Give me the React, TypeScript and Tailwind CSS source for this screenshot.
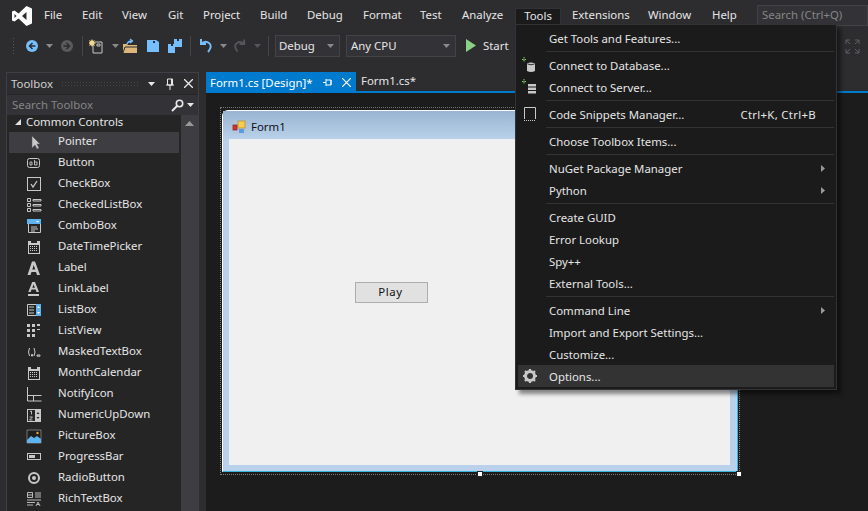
import React from 'react';

const font = "font-['Noto_Sans','Liberation_Sans',sans-serif]";

const menus = [
  { label: 'File', w: 'w-[38px]' },
  { label: 'Edit', w: 'w-[40px]' },
  { label: 'View', w: 'w-[46px]' },
  { label: 'Git', w: 'w-[35px]' },
  { label: 'Project', w: 'w-[57px]' },
  { label: 'Build', w: 'w-[47px]' },
  { label: 'Debug', w: 'w-[56px]' },
  { label: 'Format', w: 'w-[57px]' },
  { label: 'Test', w: 'w-[42px]' },
  { label: 'Analyze', w: 'w-[53px]' },
];

const Caret = ({ className = '' }: { className?: string }) => (
  <svg width="7" height="4" viewBox="0 0 7 4" className={className}>
    <path d="M0 0h7L3.5 4z" fill="currentColor" />
  </svg>
);

const Sep = () => <div className="w-px h-[20px] bg-[#46464a]" />;

const tools: { name: string; icon: React.ReactNode }[] = [
  { name: 'Pointer', icon: <path d="M6 2v12l3-3 2 4 2-1-2-4h3z" fill="#c8c8c8" stroke="#555" strokeWidth=".5" /> },
  {
    name: 'Button',
    icon: (
      <>
        <rect x="1.5" y="3.5" width="12" height="9" rx="2" fill="none" stroke="#c8c8c8" />
        <path d="M4 7h2v3H4zM8.500 5v5M8.500 7H11v3H8.500" fill="none" stroke="#c8c8c8" strokeWidth=".9" />
      </>
    ),
  },
  {
    name: 'CheckBox',
    icon: (
      <>
        <rect x="1.500" y="1.500" width="13" height="13" fill="none" stroke="#c8c8c8" />
        <path d="M5 8l2 3 4-6" fill="none" stroke="#c8c8c8" strokeWidth="1.300" />
      </>
    ),
  },
  {
    name: 'CheckedListBox',
    icon: (
      <path
        d="M1.500 1.500h3v3h-3zM1.500 6.500h3v3h-3zM1.500 11.500h3v3h-3zM7 2.500h8v1.500H7zM7 7.500h8V9H7zM7 12.500h8V14H7z"
        fill="none"
        stroke="#c8c8c8"
        strokeWidth="1"
      />
    ),
  },
  {
    name: 'ComboBox',
    icon: (
      <>
        <rect x="1" y="1" width="14" height="5" fill="#5fb3ee" />
        <path d="M10 3h3l-1.500 1.500z" fill="#fff" />
        <path d="M2.500 6v8.500h12V6M5 9h6M5 11h7M5 13h4" fill="none" stroke="#c8c8c8" />
      </>
    ),
  },
  {
    name: 'DateTimePicker',
    icon: (
      <>
        <path d="M2 2h3v2h6V2h3v13H2z" fill="#c8c8c8" />
        <path d="M3 6h10v8H3z" fill="#252526" />
        <path d="M4 7.500h8M4 9.500h8M4 11.500h8" stroke="#c8c8c8" strokeDasharray="1 1" />
      </>
    ),
  },
  { name: 'Label', icon: <path fillRule="evenodd" d="M6 1.500h3L14 15h-3l-1-3H5.500l-1 3H1.500zM6.300 9.500h3L7.700 5z" fill="#c8c8c8" /> },
  {
    name: 'LinkLabel',
    icon: <path fillRule="evenodd" d="M6.200 1h2.800l4 10h-2.500l-.8-2.500H5.500L4.700 11H2.300zM6.300 6.800h2.600L7.600 3.500zM2 13h11v2H2z" fill="#c8c8c8" />,
  },
  {
    name: 'ListBox',
    icon: (
      <>
        <path d="M1.500 2.500h13v11h-13z" fill="none" stroke="#c8c8c8" />
        <rect x="10" y="2" width="5" height="12" fill="#5fb3ee" />
        <path d="M11 6l1.500-2L14 6zM11 10l1.500 2L14 10z" fill="#fff" />
        <path d="M3 5h5M3 8h5M3 11h5" stroke="#c8c8c8" />
      </>
    ),
  },
  {
    name: 'ListView',
    icon: <path d="M1 1h3v3H1zM6 1h3v3H6zM11 1h3v2h-3zM1 6h3v3H1zM6 6h3v3H6zM11 6h3v1h-3zM1 11h3v3H1zM6 11h3v3H6z" fill="#c8c8c8" />,
  },
  {
    name: 'MaskedTextBox',
    icon: <path d="M3.500 4Q1.500 8 3.500 12M8 4Q10 8 8 12M5.500 10.500h1.200v1.500H5.500zM11 11h3v1.200h-3z" fill="none" stroke="#c8c8c8" />,
  },
  {
    name: 'MonthCalendar',
    icon: (
      <>
        <path d="M2 2h3v2h6V2h3v13H2z" fill="#c8c8c8" />
        <path d="M3 6h10v8H3z" fill="#252526" />
        <path d="M4 7.500h8M4 9.500h8M4 11.500h8" stroke="#c8c8c8" strokeDasharray="1 1" />
      </>
    ),
  },
  { name: 'NotifyIcon', icon: <path d="M1.500 1v14h14M1.500 9.500h14M7.500 9.500V15" fill="none" stroke="#c8c8c8" /> },
  {
    name: 'NumericUpDown',
    icon: (
      <>
        <rect x="1.500" y="2.500" width="13" height="12" fill="none" stroke="#c8c8c8" />
        <rect x="9" y="2" width="6" height="13" fill="#c8c8c8" />
        <path d="M10.500 7l1.500-2 1.500 2zM10.500 10l1.500 2 1.500-2z" fill="#252526" />
        <path d="M4 4.500l1.500-.5v3.500M3.500 10h3l-3 3h3" fill="none" stroke="#c8c8c8" strokeWidth=".9" />
      </>
    ),
  },
  {
    name: 'PictureBox',
    icon: (
      <>
        <path d="M1 2h14v13H1z" fill="#1f1f20" stroke="#c8c8c8" strokeWidth=".5" />
        <path d="M1 12l4-4 3 2 3-2 4 3v4H1z" fill="#5fb3ee" />
        <circle cx="11.500" cy="5" r="1.200" fill="#e8a33d" />
      </>
    ),
  },
  {
    name: 'ProgressBar',
    icon: (
      <>
        <rect x="1.500" y="4.500" width="13" height="6" fill="none" stroke="#c8c8c8" />
        <rect x="3" y="6" width="6" height="3" fill="#c8c8c8" />
      </>
    ),
  },
  {
    name: 'RadioButton',
    icon: (
      <>
        <circle cx="8" cy="8" r="5" fill="none" stroke="#c8c8c8" strokeWidth="2" />
        <circle cx="8" cy="8" r="2" fill="#c8c8c8" />
      </>
    ),
  },
  {
    name: 'RichTextBox',
    icon: (
      <path
        d="M1.500 1.500h5v5h-5zM1.500 4h5M9 2h6M9 4h6M9 6h6M1 9h14M1 11.500h8M1 14h6M10 15l2-4 2 4M11 13.500h2"
        fill="none"
        stroke="#c8c8c8"
        strokeWidth=".9"
      />
    ),
  },
];

type MenuItem = { label?: string; shortcut?: string; arrow?: boolean; active?: boolean; icon?: React.ReactNode; sep?: boolean };

const plus = <path d="M2 0v5M0 2.500h4" stroke="#7fd35f" strokeWidth="1" strokeDasharray="1 .5" />;

const toolsMenu: MenuItem[] = [
  { label: 'Get Tools and Features...' },
  { sep: true },
  {
    label: 'Connect to Database...',
    icon: (
      <svg width="16" height="16" viewBox="0 0 16 16">
        {plus}
        <path d="M5 6.500q4-2 8 0V14q-4 2-8 0z" fill="#c8c8c8" />
        <path d="M5.500 7q3.500 1.500 7 0" fill="none" stroke="#333" />
      </svg>
    ),
  },
  {
    label: 'Connect to Server...',
    icon: (
      <svg width="16" height="16" viewBox="0 0 16 16">
        {plus}
        <path d="M6 5h8v2.500H6zM6 8.500h8V11H6zM6 12h8v2.500H6z" fill="#c8c8c8" />
      </svg>
    ),
  },
  { sep: true },
  {
    label: 'Code Snippets Manager...',
    shortcut: 'Ctrl+K, Ctrl+B',
    icon: (
      <svg width="16" height="16" viewBox="0 0 16 16">
        <path d="M2.500 13V1.500h11V13" fill="none" stroke="#c8c8c8" />
        <path d="M2 14.500h12" stroke="#c8c8c8" strokeDasharray="1 1" />
      </svg>
    ),
  },
  { sep: true },
  { label: 'Choose Toolbox Items...' },
  { sep: true },
  { label: 'NuGet Package Manager', arrow: true },
  { label: 'Python', arrow: true },
  { sep: true },
  { label: 'Create GUID' },
  { label: 'Error Lookup' },
  { label: 'Spy++' },
  { label: 'External Tools...' },
  { sep: true },
  { label: 'Command Line', arrow: true },
  { label: 'Import and Export Settings...' },
  { label: 'Customize...' },
  {
    label: 'Options...',
    active: true,
    icon: (
      <svg width="16" height="16" viewBox="0 0 16 16">
        <circle cx="8" cy="8" r="4.500" fill="none" stroke="#c8c8c8" strokeWidth="3" />
        <path
          d="M8 1v14M1 8h14M3 3l10 10M13 3L3 13"
          stroke="#c8c8c8"
          strokeWidth="2.200"
          strokeDasharray="2.500 9 2.500 0"
        />
        <circle cx="8" cy="8" r="1.700" fill="#333" />
      </svg>
    ),
  },
];

const FormIcon = () => (
  <svg width="14" height="14" viewBox="0 0 14 14">
    <rect x=".5" y=".5" width="13" height="13" fill="#b8c4d4" opacity=".5" />
    <rect x="6" y="1" width="7" height="7" fill="#f5cd50" stroke="#b58a1e" strokeWidth=".7" />
    <rect x="1" y="5" width="4" height="5" fill="#d9302a" stroke="#8a1c1c" strokeWidth=".7" />
    <rect x="7" y="9" width="5" height="4" fill="#5c9be0" />
  </svg>
);

export default function App() {
  return (
    <div className={`${font} relative w-[868px] h-[511px] overflow-hidden bg-[#2d2d30] text-[11.4px] text-[#e6e6e6]`}>
      {/* title / menu bar */}
      <div className="flex items-center h-[31px]">
        <svg width="22" height="22" viewBox="0 0 22 22" className="ml-[11px] mr-[11px]">
          <path d="M15.500 1L21 3.500v15L15.500 21 7.500 13.500 3.500 16.500 1 15.500v-9L3.500 5.500l4 3zM15.500 7l-4.500 4 4.500 4zM3.500 9v4l2-2z" fill="#fff" fillRule="evenodd" />
        </svg>
        {menus.map((m) => (
          <span key={m.label} className={`${m.w} leading-[18px] pb-[2px]`}>
            {m.label}
          </span>
        ))}
        <span className="ml-[8px] w-[49px]" />
        <span className="w-[76px] leading-[18px] pb-[2px]">Extensions</span>
        <span className="w-[64px] leading-[18px] pb-[2px]">Window</span>
        <span className="w-[45px] leading-[18px] pb-[2px]">Help</span>
        <div className="w-[111px] h-[21px] border border-[#434346] bg-[#333337] pl-[4px] text-[#858585] leading-[18px]">Search (Ctrl+Q)</div>
      </div>

      {/* toolbar */}
      <div className="flex items-center h-[29px] pl-[12px]">
        <div className="w-[4px] h-[17px] mr-[9px] bg-[radial-gradient(#55555a_1px,transparent_1px)] bg-[length:3px_3px]" />
        <svg width="14" height="14" viewBox="0 0 14 14">
          <circle cx="7" cy="7" r="6" fill="#75beff" />
          <path d="M10.500 7h-5M7.500 4L4.500 7l3 3" fill="none" stroke="#2d2d30" strokeWidth="1.500" />
        </svg>
        <Caret className="ml-[7px] mr-[7px] text-[#8a8a8a]" />
        <svg width="14" height="14" viewBox="0 0 14 14">
          <circle cx="7" cy="7" r="6" fill="#5a5a5c" />
          <path d="M3.500 7h5M6.500 4l3 3-3 3" fill="none" stroke="#2d2d30" strokeWidth="1.500" />
        </svg>
        <div className="ml-[8px] mr-[6px]"><Sep /></div>
        <svg width="16" height="16" viewBox="0 0 16 16">
          <path d="M6 4h7v11H4V7" fill="none" stroke="#c8c8c8" />
          <path d="M3 1l1 2 2-1-1 2 2 1-2 1 1 2-2-1-1 2-1-2-2 1 1-2-2-1 2-1-1-2 2 1z" fill="#f2d88c" />
          <path d="M8 6h3v2H8z" fill="none" stroke="#c8c8c8" />
        </svg>
        <Caret className="ml-[7px] mr-[3px] text-[#8a8a8a]" />
        <svg width="16" height="16" viewBox="0 0 16 16">
          <path d="M1 6h4l1 1h9v8H1z" fill="#dcb67a" />
          <path d="M1 15l2-6h12" fill="none" stroke="#2d2d30" />
          <path d="M5 6q1-3 5-3M8 1l2.500 2L8 5" fill="none" stroke="#75beff" strokeWidth="1.300" />
        </svg>
        <svg width="14" height="14" viewBox="0 0 14 14" className="ml-[8px]">
          <path d="M1 1h9v4H4V1h6l3 2v10H1z" fill="#75beff" />
          <path d="M7 2h2v2H7z" fill="#2d2d30" />
        </svg>
        <svg width="16" height="16" viewBox="0 0 16 16" className="ml-[7px]">
          <path d="M7 1h3v2h2V1h3v8H7zM1 6h3v2h2V6h2v9H1z" fill="#75beff" />
        </svg>
        <div className="ml-[7px] mr-[7px]"><Sep /></div>
        <svg width="15" height="16" viewBox="0 0 15 16">
          <path d="M3 1v5h5M3 6q4-4 8-1t-1 9" fill="none" stroke="#75beff" strokeWidth="2" />
        </svg>
        <Caret className="ml-[7px] mr-[6px] text-[#8a8a8a]" />
        <svg width="14" height="16" viewBox="0 0 15 16">
          <path d="M12 1v5H7M12 6Q8 2 4 5t1 9" fill="none" stroke="#55555a" strokeWidth="2" />
        </svg>
        <Caret className="ml-[7px] mr-[1px] text-[#55555a]" />
        <div className="ml-[6px] mr-[6px]"><Sep /></div>
        <div className="flex items-center justify-between w-[65px] h-[22px] border border-[#434346] bg-[#333337] pl-[3px] pr-[5px]">
          <span>Debug</span>
          <Caret className="text-[#8a8a8a]" />
        </div>
        <div className="flex items-center justify-between ml-[6px] w-[110px] h-[22px] border border-[#434346] bg-[#333337] pl-[4px] pr-[5px]">
          <span>Any CPU</span>
          <Caret className="text-[#8a8a8a]" />
        </div>
        <svg width="10" height="13" viewBox="0 0 10 13" className="ml-[10px] mr-[7px]">
          <path d="M0 0l10 6.500L0 13z" fill="#89d185" />
        </svg>
        <span>Start</span>
        <div className="flex-1" />
        <svg width="15" height="15" viewBox="0 0 15 15" className="mr-[8px] mt-[1px]">
          <path d="M5 1H1v4M1 1l4 4M10 1h4v4M14 1l-4 4M5 14H1v-4M1 14l4-4M10 14h4v-4M14 14l-4-4" fill="none" stroke="#5f5f62" />
        </svg>
      </div>

      {/* body */}
      <div className="flex h-[451px] pt-[12px]">
        {/* toolbox */}
        <div className="flex flex-col ml-[6px] w-[193px] border-x border-t border-[#3f3f46] bg-[#252526]">
          <div className="flex items-center h-[21px] pl-[4px] pr-[5px] bg-[#2d2d30] text-[#d0d0d0]">
            <span>Toolbox</span>
            <div className="flex-1 h-[5px] mx-[8px] bg-[radial-gradient(#46464a_1px,transparent_1px)] bg-[length:3px_3px]" />
            <Caret className="text-[#e8e8e8] mr-[11px]" />
            <svg width="8" height="12" viewBox="0 0 8 12" className="mr-[10px]">
              <path d="M1.500 1h5v6h-5zM0 7h8M4 7v5M5.500 1v6" fill="none" stroke="#e8e8e8" />
            </svg>
            <svg width="9" height="9" viewBox="0 0 9 9">
              <path d="M0 0l9 9M9 0L0 9" stroke="#e8e8e8" strokeWidth="1.300" />
            </svg>
          </div>
          <div className="flex items-center h-[20px] mt-px pl-[5px] pr-[4px] bg-[#333337] text-[#858585]">
            <span className="flex-1">Search Toolbox</span>
            <svg width="13" height="13" viewBox="0 0 13 13">
              <circle cx="8.500" cy="4.500" r="3.200" fill="none" stroke="#e8e8e8" strokeWidth="1.600" />
              <path d="M6 7l-5 5" stroke="#e8e8e8" strokeWidth="2" />
            </svg>
            <Caret className="ml-[3px] text-[#e8e8e8]" />
          </div>
          <div className="flex flex-1 min-h-0 overflow-hidden">
            <div className="flex-1 min-w-0 overflow-hidden">
              <div className="flex items-start h-[17px] pl-[8px]">
                <svg width="6" height="6" viewBox="0 0 6 6" className="mr-[5px] mt-[4px]">
                  <path d="M6 0v6H0z" fill="#e0e0e0" />
                </svg>
                <span className="leading-[13px]">Common Controls</span>
              </div>
              {tools.map((t) => (
                <div key={t.name} className={`flex items-center h-[21px] ml-[2px] mr-[2px] pl-[17px] pb-[2px] ${t.name === 'Pointer' ? 'bg-[#3e3e42]' : ''}`}>
                  <svg width="16" height="16" viewBox="0 0 16 16" className="shrink-0">
                    {t.icon}
                  </svg>
                  <span className="ml-[16px] leading-[16px] pb-px">{t.name}</span>
                </div>
              ))}
            </div>
            <div className="w-[17px] shrink-0 bg-[#3e3e42] flex justify-center pt-[6px]">
              <svg width="9" height="5" viewBox="0 0 9 5">
                <path d="M4.500 0L9 5H0z" fill="#999" />
              </svg>
            </div>
          </div>
        </div>

        {/* document well */}
        <div className="flex flex-col flex-1 min-w-0 ml-[7px]">
          <div className="flex h-[21px] border-b-[2px] border-[#007acc]">
            <div className="flex items-center w-[150px] h-[21px] bg-[#007acc] pl-[4px] pr-[5px] text-white">
              <span className="flex-1 whitespace-nowrap">Form1.cs [Design]*</span>
              <svg width="10" height="9" viewBox="0 0 10 9" className="mr-[9px]">
                <path d="M0 4.500h3M3 1v7M3 2h5v5H3M8 2v5" fill="none" stroke="#fff" />
              </svg>
              <svg width="9" height="9" viewBox="0 0 9 9">
                <path d="M0 0l9 9M9 0L0 9" stroke="#fff" strokeWidth="1.200" />
              </svg>
            </div>
            <span className="pl-[5px] leading-[18px]">Form1.cs*</span>
          </div>
          <div className="flex-1 min-h-0 bg-[#1c1c1c] pt-[14px] pl-[14px]">
            {/* form under design, inside its dotted selection frame */}
            <div className="relative w-[520px] h-[368px] border border-dotted border-[#777777] px-px pt-[2px]">
              <div className="flex flex-col w-[516px] h-[362px] rounded-tl-[6px] bg-[#b9d1ea] border-t border-l border-white border-r border-r-[#36b5dc] border-b border-b-[#36b5dc] pl-[6px] pr-[7px] pb-[6px]">
                <div className="flex items-center h-[28px] -ml-[6px] -mr-[7px] pl-[9px] pt-[3px] bg-gradient-to-b from-[#99b4d1] to-[#b9d1ea] text-[#101020] shrink-0">
                  <FormIcon />
                  <span className="ml-[5px]">Form1</span>
                </div>
                <div className="flex-1 bg-[#f0f0f0] pl-[126px] pt-[143px]">
                  <div className="w-[73px] h-[21px] border border-[#adadad] bg-[#e1e1e1] text-[#101010] text-center leading-[18px] tracking-[.6px] pr-[2px]">Play</div>
                </div>
              </div>
              <div className="absolute left-[256px] -bottom-[3px] w-[6px] h-[6px] bg-white border border-[#222]" />
              <div className="absolute -right-[3px] -bottom-[3px] w-[6px] h-[6px] bg-white border border-[#222]" />
            </div>
          </div>
        </div>
      </div>

      {/* open Tools menu */}
      <div className="absolute left-[515px] top-[8px] w-[46px] h-[17px] bg-[#1b1b1c] border border-b-0 border-[#333337] text-center leading-[13px]">Tools</div>
      <div className="absolute left-[515px] top-[24px] w-[322px] h-[366px] bg-[#1b1b1c] border border-[#333337] p-[2px] shadow-[4px_4px_4px_rgba(0,0,0,0.45)]">
        {toolsMenu.map((item, i) =>
          item.sep ? (
            <div key={i} className="h-[5px] ml-[28px] flex items-center">
              <div className="w-full h-px bg-[#333337]" />
            </div>
          ) : (
            <div key={i} className={`relative flex items-center h-[22px] pl-[31px] pt-[2px] ${item.active ? 'bg-[#333334]' : ''}`}>
              {item.icon && <div className="absolute left-[4px] top-[3px] flex">{item.icon}</div>}
              <span className="flex-1 whitespace-nowrap leading-[16px]">{item.label}</span>
              {item.shortcut && <span className="mr-[18px] leading-[16px] tracking-[.3px]">{item.shortcut}</span>}
              {item.arrow && (
                <svg width="4" height="7" viewBox="0 0 4 7" className="mr-[9px] -mt-[2px]">
                  <path d="M0 0l4 3.500L0 7z" fill="#999" />
                </svg>
              )}
            </div>
          ),
        )}
      </div>
    </div>
  );
}
